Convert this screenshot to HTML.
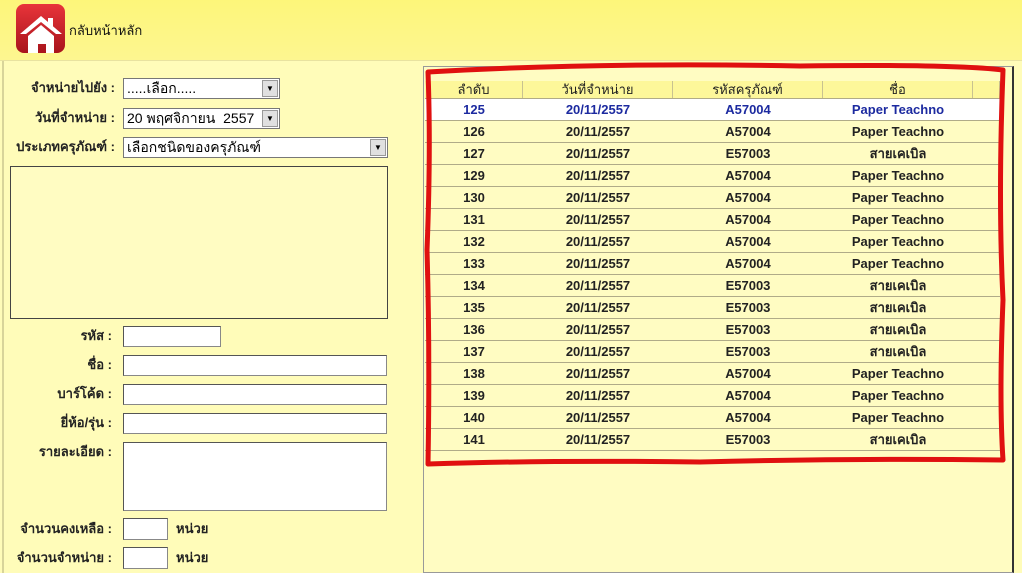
<!DOCTYPE html>
<html><head><meta charset="utf-8"><style>
*{margin:0;padding:0;box-sizing:border-box}
body{width:1022px;height:573px;overflow:hidden;background:#fffcb9;font-family:"Liberation Sans","Noto Sans CJK JP",sans-serif;font-size:13px;position:relative}
.hdr{position:absolute;left:0;top:0;width:1022px;height:61px;background:linear-gradient(#fdf67a,#fdf690);border-bottom:1px solid #e8e2a0}
.lb{position:absolute;left:2px;top:61px;width:2px;height:512px;background:#d8d49a}
.abs{position:absolute}
.lab{position:absolute;text-align:right;font-weight:bold;color:#222;font-size:13px;line-height:16px}
.in{position:absolute;background:#fff;border:1px solid #888;border-top-color:#555;border-left-color:#555}
.sel{position:absolute;background:#fff;border:1px solid #777;font-size:14px;padding-left:3px;line-height:18px}
.arr{position:absolute;right:1px;top:1px;width:16px;height:17px;background:#e0e0e0;border:1px solid #999;font-size:8px;text-align:center;line-height:16px}
.panel{position:absolute;left:423px;top:66px;width:591px;height:507px;border:1px solid #999;border-right:2px solid #333;background:#fffcc2}
.tb{position:absolute;left:425px;top:81px;width:575px;font-size:13px;font-weight:bold}
.r{display:flex;height:22px;line-height:21px;border-bottom:1px solid #b0ab88;color:#222;text-align:center;overflow:hidden}
.r div{flex:none}
.h{height:18px;line-height:17px;font-weight:normal;background:#fdf79a;border-bottom:1px solid #b0ab88}
.h div{border-right:1px solid #c8c290;height:18px}
.r.s{background:#fff;color:#1c2aa0}
.c1{width:98px}.c2{width:150px}.c3{width:150px}.c4{width:150px}.c5{width:27px}
</style></head><body>
<div class="hdr"></div>
<svg class="abs" style="left:16px;top:4px" width="50" height="50" viewBox="0 0 50 50">
<defs><linearGradient id="g" x1="0" y1="0" x2="0" y2="1"><stop offset="0" stop-color="#e8343a"/><stop offset="1" stop-color="#a8141c"/></linearGradient></defs>
<rect x="0" y="0" width="49" height="49" rx="8" fill="url(#g)"/>
<path d="M4 30 L25 12 L46 30 L40 30 L25 18 L10 30 Z" fill="#fff"/>
<path d="M12 32 L25 21 L38 32 L38 49 L30 49 L30 40 L22 40 L22 49 L12 49Z" fill="#fff"/>
<rect x="32" y="14" width="5" height="9" fill="#fff"/>
</svg>
<div class="abs" style="left:69px;top:20px;font-size:13px;color:#111">กลับหน้าหลัก</div>
<div class="lb"></div>

<div class="lab" style="left:0;width:115px;top:80px">จำหน่ายไปยัง :</div>
<div class="sel" style="left:123px;top:78px;width:157px;height:21px">.....เลือก.....<div class="arr">▼</div></div>
<div class="lab" style="left:0;width:115px;top:110px">วันที่จำหน่าย :</div>
<div class="sel" style="left:123px;top:108px;width:157px;height:21px">20 พฤศจิกายน &nbsp;2557<div class="arr">▼</div></div>
<div class="lab" style="left:0;width:115px;top:139px">ประเภทครุภัณฑ์ :</div>
<div class="sel" style="left:123px;top:137px;width:265px;height:21px">เลือกชนิดของครุภัณฑ์<div class="arr">▼</div></div>
<div class="abs" style="left:10px;top:166px;width:378px;height:153px;border:1px solid #444;background:#fffcc2"></div>

<div class="lab" style="left:0;width:112px;top:328px">รหัส :</div>
<div class="in" style="left:123px;top:326px;width:98px;height:21px"></div>
<div class="lab" style="left:0;width:112px;top:357px">ชื่อ :</div>
<div class="in" style="left:123px;top:355px;width:264px;height:21px"></div>
<div class="lab" style="left:0;width:112px;top:386px">บาร์โค้ด :</div>
<div class="in" style="left:123px;top:384px;width:264px;height:21px"></div>
<div class="lab" style="left:0;width:112px;top:415px">ยี่ห้อ/รุ่น :</div>
<div class="in" style="left:123px;top:413px;width:264px;height:21px"></div>
<div class="lab" style="left:0;width:112px;top:444px">รายละเอียด :</div>
<div class="in" style="left:123px;top:442px;width:264px;height:69px"></div>
<div class="lab" style="left:0;width:112px;top:521px">จำนวนคงเหลือ :</div>
<div class="in" style="left:123px;top:518px;width:45px;height:22px"></div>
<div class="abs" style="left:176px;top:521px;font-weight:bold;color:#222;line-height:16px">หน่วย</div>
<div class="lab" style="left:0;width:112px;top:550px">จำนวนจำหน่าย :</div>
<div class="in" style="left:123px;top:547px;width:45px;height:22px"></div>
<div class="abs" style="left:176px;top:550px;font-weight:bold;color:#222;line-height:16px">หน่วย</div>

<div class="panel"></div>
<div class="tb">
<div class="r h"><div class="c1">ลำดับ</div><div class="c2">วันที่จำหน่าย</div><div class="c3">รหัสครุภัณฑ์</div><div class="c4">ชื่อ</div><div class="c5"></div></div>
<div class="r s"><div class="c1">125</div><div class="c2">20/11/2557</div><div class="c3">A57004</div><div class="c4">Paper Teachno</div></div>
<div class="r"><div class="c1">126</div><div class="c2">20/11/2557</div><div class="c3">A57004</div><div class="c4">Paper Teachno</div></div>
<div class="r"><div class="c1">127</div><div class="c2">20/11/2557</div><div class="c3">E57003</div><div class="c4">สายเคเบิล</div></div>
<div class="r"><div class="c1">129</div><div class="c2">20/11/2557</div><div class="c3">A57004</div><div class="c4">Paper Teachno</div></div>
<div class="r"><div class="c1">130</div><div class="c2">20/11/2557</div><div class="c3">A57004</div><div class="c4">Paper Teachno</div></div>
<div class="r"><div class="c1">131</div><div class="c2">20/11/2557</div><div class="c3">A57004</div><div class="c4">Paper Teachno</div></div>
<div class="r"><div class="c1">132</div><div class="c2">20/11/2557</div><div class="c3">A57004</div><div class="c4">Paper Teachno</div></div>
<div class="r"><div class="c1">133</div><div class="c2">20/11/2557</div><div class="c3">A57004</div><div class="c4">Paper Teachno</div></div>
<div class="r"><div class="c1">134</div><div class="c2">20/11/2557</div><div class="c3">E57003</div><div class="c4">สายเคเบิล</div></div>
<div class="r"><div class="c1">135</div><div class="c2">20/11/2557</div><div class="c3">E57003</div><div class="c4">สายเคเบิล</div></div>
<div class="r"><div class="c1">136</div><div class="c2">20/11/2557</div><div class="c3">E57003</div><div class="c4">สายเคเบิล</div></div>
<div class="r"><div class="c1">137</div><div class="c2">20/11/2557</div><div class="c3">E57003</div><div class="c4">สายเคเบิล</div></div>
<div class="r"><div class="c1">138</div><div class="c2">20/11/2557</div><div class="c3">A57004</div><div class="c4">Paper Teachno</div></div>
<div class="r"><div class="c1">139</div><div class="c2">20/11/2557</div><div class="c3">A57004</div><div class="c4">Paper Teachno</div></div>
<div class="r"><div class="c1">140</div><div class="c2">20/11/2557</div><div class="c3">A57004</div><div class="c4">Paper Teachno</div></div>
<div class="r"><div class="c1">141</div><div class="c2">20/11/2557</div><div class="c3">E57003</div><div class="c4">สายเคเบิล</div></div>
</div>
<svg class="abs" style="left:0;top:0" width="1022" height="573">
<path d="M428 72 Q600 62 800 66 Q950 64 1003 70 Q998 200 1003 300 Q999 400 1003 460 Q850 458 700 462 Q550 460 428 464 Q430 350 427 250 Q431 150 428 72Z" fill="none" stroke="#e01010" stroke-width="5" stroke-linejoin="round"/>
</svg>
</body></html>
